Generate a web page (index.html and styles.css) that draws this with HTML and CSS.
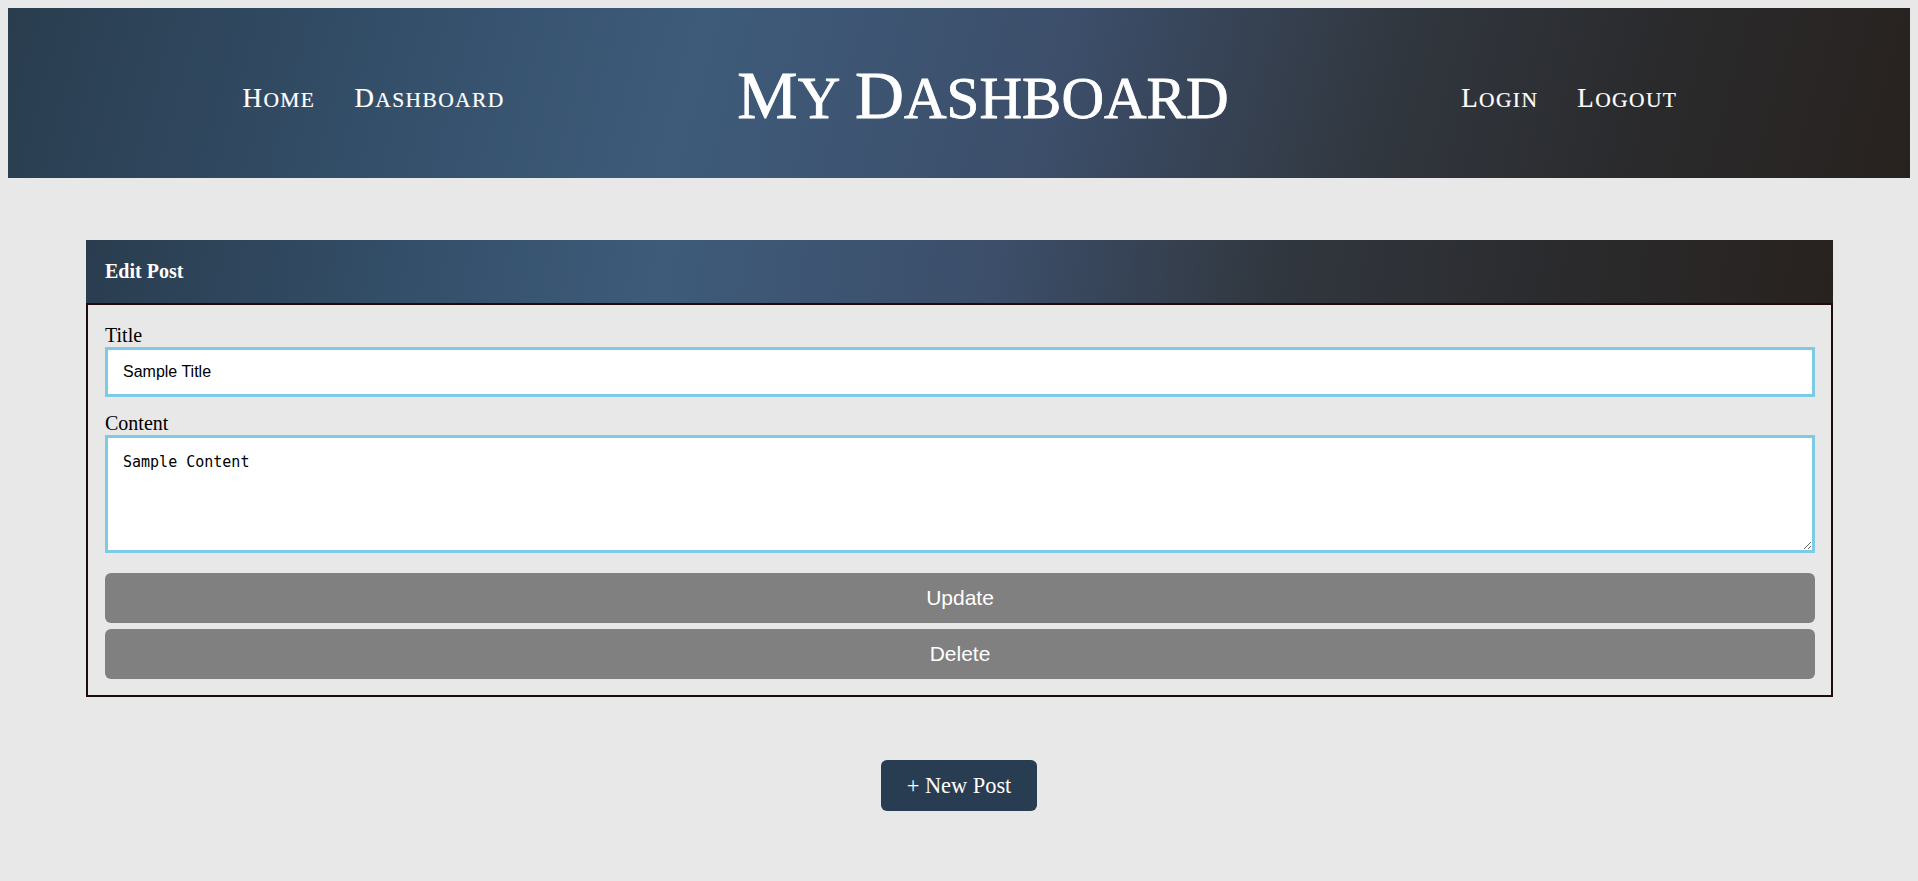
FILE: index.html
```html
<!DOCTYPE html>
<html lang="en">
<head>
<meta charset="utf-8">
<title>My Dashboard</title>
<link rel="stylesheet" href="styles.css">
</head>
<body>
<header class="site-header">
  <nav class="nav">
    <a class="nav-link" href="#"><span class="word">Home</span></a>
    <a class="nav-link" href="#"><span class="word">Dashboard</span></a>
  </nav>
  <h1 class="site-title"><span class="word">My</span> <span class="word">Dashboard</span></h1>
  <nav class="nav">
    <a class="nav-link" href="#"><span class="word">Login</span></a>
    <a class="nav-link" href="#"><span class="word">Logout</span></a>
  </nav>
</header>

<main class="main">
  <section class="card">
    <div class="card-header">Edit Post</div>
    <form class="card-body">
      <label class="field-label" for="title">Title</label>
      <input class="field-input" id="title" type="text" value="Sample Title">
      <label class="field-label" for="content">Content</label>
      <textarea class="field-textarea" id="content">Sample Content</textarea>
      <button class="btn-grey" type="button">Update</button>
      <button class="btn-grey" type="button">Delete</button>
    </form>
  </section>

  <div class="new-post-row">
    <button class="btn-new" type="button">+ New Post</button>
  </div>
</main>
</body>
</html>
```

FILE: styles.css
```css
html, body {
  background: #e8e8e8;
}

body {
  margin: 8px;
  font-family: "Liberation Serif", "Times New Roman", serif;
  color: #000;
}

.site-header {
  height: 170px;
  box-sizing: border-box;
  padding: 6px 0 0 2px;
  display: flex;
  align-items: center;
  justify-content: space-evenly;
  background: linear-gradient(105deg, #2a3d4f 0%, #34506b 22%, #3e5b7a 36%, #3c4e6a 55%, #31373f 72%, #2a2a2c 86%, #28221f 100%);
}

.nav {
  display: flex;
  gap: 39px;
  margin-top: 4px;
}

.nav-link {
  color: #fff;
  text-decoration: none;
  font-size: 21.5px;
  letter-spacing: 1.4px;
  -webkit-text-stroke: 0.2px #fff;
}

.word {
  display: inline-block;
  text-transform: uppercase;
}

.word::first-letter {
  font-size: 1.25em;
}

.site-title {
  margin: 0;
  color: #fff;
  font-weight: normal;
  font-size: 59px;
  -webkit-text-stroke: 0.8px #fff;
}

.site-title .word::first-letter {
  font-size: 1.15em;
}

.main {
  padding-top: 62px;
}

.card {
  margin: 0 77px 0 78px;
}

.card-header {
  height: 63px;
  padding: 0 19px;
  display: flex;
  align-items: center;
  color: #fff;
  font-weight: bold;
  font-size: 20px;
  background: linear-gradient(100deg, #2a3d4f 0%, #34506b 20%, #3e5b7a 33%, #3c4e6a 52%, #31373f 68%, #2a2a2c 85%, #28221f 100%);
}

.card-body {
  margin: 0;
  border: 2px solid #210c0c;
  padding: 19px 16px 16px 17px;
}

.field-label {
  display: block;
  font-size: 20px;
  line-height: 23px;
}

.field-input {
  display: block;
  width: 100%;
  box-sizing: border-box;
  height: 50px;
  margin: 0 0 15px;
  padding: 0 15px;
  border: 3px solid #7ecbe6;
  background: #fff;
  font-family: "Liberation Sans", Arial, sans-serif;
  font-size: 16px;
  color: #000;
  outline: none;
}

.field-textarea {
  display: block;
  width: 100%;
  box-sizing: border-box;
  height: 118px;
  margin: 0 0 20px;
  padding: 15px;
  border: 3px solid #7ecbe6;
  background: #fff;
  font-family: "DejaVu Sans Mono", "Liberation Mono", monospace;
  font-size: 15px;
  color: #000;
  outline: none;
}

.btn-grey {
  display: block;
  width: 100%;
  height: 50px;
  border: none;
  border-radius: 6px;
  background: #808080;
  color: #fff;
  font-family: "Liberation Sans", Arial, sans-serif;
  font-size: 21px;
  cursor: pointer;
}

.btn-grey + .btn-grey {
  margin-top: 6px;
}

.new-post-row {
  display: flex;
  justify-content: center;
  padding-top: 63px;
}

.btn-new {
  width: 156px;
  height: 51px;
  border: none;
  border-radius: 6px;
  background: #293d52;
  color: #fff;
  font-family: "Liberation Serif", "Times New Roman", serif;
  font-size: 22.4px;
  cursor: pointer;
}
```
